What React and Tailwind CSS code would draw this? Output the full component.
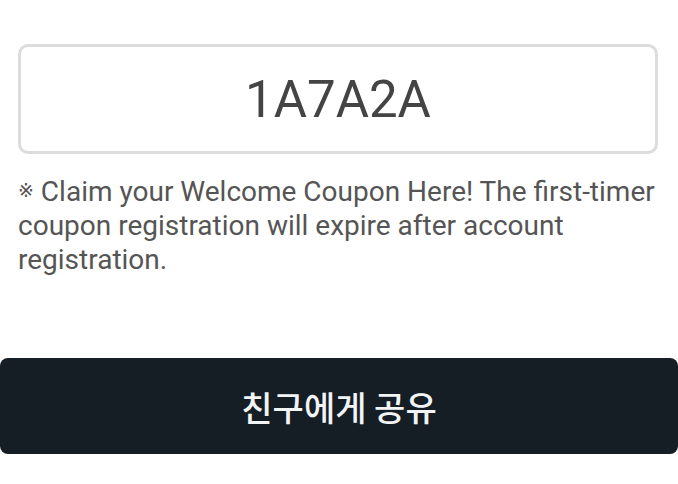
export default function App() {
  return (
    <div className="w-[678px] h-[484px] bg-white overflow-hidden" style={{ fontFamily: 'Roboto, "Noto Sans CJK KR", sans-serif' }}>
      <div className="pt-[44px] px-[18px]">
        <div className="h-[110px] w-[640px] rounded-[10px] border-[3px] border-[#dcdcdc] flex items-center justify-center">
          <span className="text-[51px] leading-none text-[#444444] font-['Roboto',sans-serif]">1A7A2A</span>
        </div>
        <p className="mt-[21px] text-[28px] leading-[34px] text-[#555555] font-['Roboto',sans-serif]">
          <span className="text-[19px] leading-none align-[4px] font-['DejaVu_Sans',sans-serif]">※</span> Claim your Welcome Coupon Here! The first&#8209;timer coupon registration will expire after account registration.
        </p>
      </div>
      <div className="mt-[81px] h-[96px] w-[678px] rounded-[8px] bg-[#151d25] flex items-center justify-center">
        <span className="text-[34px] font-medium text-[#f2f4f6] font-['Noto_Sans_CJK_KR',sans-serif]">친구에게 공유</span>
      </div>
    </div>
  );
}
